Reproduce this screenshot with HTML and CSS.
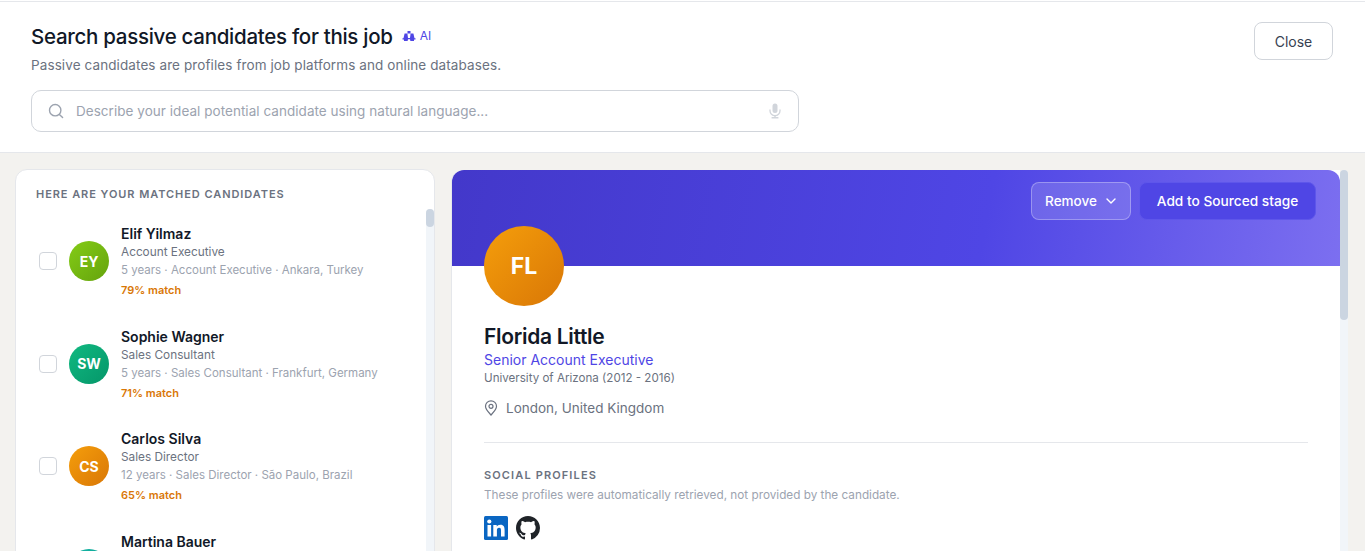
FILE: index.html
```html
<!DOCTYPE html>
<html lang="en">
<head>
    <meta charset="UTF-8">
    <meta name="viewport" content="width=device-width, initial-scale=1.0">
    <title>Search passive candidates</title>
    <link rel="stylesheet" href="styles.css">
</head>
<body>
    <header class="search-header">
        <div class="header-main">
            <div class="title-row">
                <h1>Search passive candidates for this job</h1>
                <span class="ai-badge">
                    <svg width="14" height="12" viewBox="0 0 14 12" fill="#4f46e5"><path d="M5.500 1h3v2.400h-3zM2.600 3.400h2.800l.6 4.600H8l.6-4.600h2.800l1.100 4.800H13.500V9.500h-1.400L12 11H8.400L8 9.200H6L5.600 11H2L1.900 9.500H.5V8.200h1z"/></svg>
                    AI
                </span>
            </div>
            <p class="subtitle">Passive candidates are profiles from job platforms and online databases.</p>
            <div class="search-box">
                <svg width="16" height="16" viewBox="0 0 16 16" fill="none" stroke="#9ca3af" stroke-width="1.400" stroke-linecap="round"><circle cx="7.200" cy="7.200" r="5.700"/><path d="M11.400 11.400l3.200 3.200"/></svg>
                <span class="placeholder">Describe your ideal potential candidate using natural language...</span>
                <svg class="mic" width="12" height="16" viewBox="0 0 12 16" fill="#d1d5db"><rect x="3.500" y="0.500" width="5" height="9.500" rx="2.500"/><path d="M1 6.500v1.200a5 5 0 0 0 10 0V6.500" fill="none" stroke="#d1d5db" stroke-width="1.300"/><rect x="5.300" y="12" width="1.400" height="2.500"/><rect x="2.500" y="14" width="7" height="1.500" rx=".5"/></svg>
            </div>
        </div>
        <button class="close-btn">Close</button>
    </header>

    <main class="content">
        <section class="candidates-card">
            <h2 class="section-label card-label">HERE ARE YOUR MATCHED CANDIDATES</h2>
            <div class="list-wrap">
                <div class="candidate-list">
                    <div class="candidate">
                        <span class="checkbox"></span>
                        <span class="avatar green">EY</span>
                        <div class="info">
                            <div class="name">Elif Yilmaz</div>
                            <div class="role">Account Executive</div>
                            <div class="meta">5 years · Account Executive · Ankara, Turkey</div>
                            <div class="match">79% match</div>
                        </div>
                    </div>
                    <div class="candidate">
                        <span class="checkbox"></span>
                        <span class="avatar teal">SW</span>
                        <div class="info">
                            <div class="name">Sophie Wagner</div>
                            <div class="role">Sales Consultant</div>
                            <div class="meta">5 years · Sales Consultant · Frankfurt, Germany</div>
                            <div class="match">71% match</div>
                        </div>
                    </div>
                    <div class="candidate">
                        <span class="checkbox"></span>
                        <span class="avatar orange">CS</span>
                        <div class="info">
                            <div class="name">Carlos Silva</div>
                            <div class="role">Sales Director</div>
                            <div class="meta">12 years · Sales Director · São Paulo, Brazil</div>
                            <div class="match">65% match</div>
                        </div>
                    </div>
                    <div class="candidate">
                        <span class="checkbox"></span>
                        <span class="avatar aqua"></span>
                        <div class="info">
                            <div class="name">Martina Bauer</div>
                        </div>
                    </div>
                </div>
                <div class="scrollbar list-scroll"><div class="thumb"></div></div>
            </div>
        </section>

        <section class="profile">
            <div class="banner">
                <button class="remove-btn">Remove
                    <svg width="12" height="12" viewBox="0 0 12 12" fill="none" stroke="#fff" stroke-width="1.400" stroke-linecap="round" stroke-linejoin="round"><path d="M2 4l4 4 4-4"/></svg>
                </button>
                <button class="add-btn">Add to Sourced stage</button>
            </div>
            <div class="profile-body">
                <span class="avatar orange big">FL</span>
                <h2 class="profile-name">Florida Little</h2>
                <div class="profile-title">Senior Account Executive</div>
                <div class="profile-edu">University of Arizona (2012 - 2016)</div>
                <div class="profile-loc">
                    <svg width="14" height="16" viewBox="0 0 14 16" fill="none" stroke="#6b7280" stroke-width="1.200"><path d="M7 15C4.500 12.300 1.500 9.400 1.500 6.300a5.500 5.500 0 0 1 11 0C12.500 9.400 9.500 12.300 7 15z"/><circle cx="7" cy="6.300" r="2"/></svg>
                    London, United Kingdom
                </div>
                <hr class="divider">
                <h3 class="section-label social-label">SOCIAL PROFILES</h3>
                <p class="social-note">These profiles were automatically retrieved, not provided by the candidate.</p>
                <div class="social-icons">
                    <svg width="24" height="24" viewBox="0 0 24 24"><rect width="24" height="24" rx="1.500" fill="#0a66c2"/><rect x="3.500" y="9" width="3.600" height="11.500" fill="#fff"/><circle cx="5.300" cy="5.500" r="2.100" fill="#fff"/><path d="M9.300 9h3.400v1.600c.6-1 1.900-1.900 3.700-1.900 3.500 0 4.200 2.300 4.200 5.300v6.500H17v-5.800c0-1.400 0-3-1.900-3s-2.200 1.400-2.200 2.900v5.900H9.300z" fill="#fff"/></svg>
                    <svg width="24" height="24" viewBox="0 0 16 16" fill="#1f2328"><path d="M8 0C3.580 0 0 3.580 0 8c0 3.540 2.290 6.530 5.470 7.590.4.070.55-.17.55-.38 0-.19-.01-.82-.01-1.490-2.010.37-2.530-.49-2.690-.94-.09-.23-.48-.94-.82-1.130-.28-.15-.68-.52-.01-.53.630-.01 1.080.58 1.230.82.720 1.210 1.870.87 2.330.66.070-.52.280-.87.510-1.070-1.780-.2-3.640-.89-3.640-3.950 0-.87.310-1.590.820-2.150-.08-.2-.36-1.020.08-2.120 0 0 .67-.21 2.200.82.640-.18 1.320-.27 2-.27s1.360.09 2 .27c1.530-1.040 2.200-.82 2.200-.82.440 1.100.16 1.920.08 2.120.51.560.82 1.270.82 2.150 0 3.070-1.870 3.750-3.650 3.950.29.250.54.730.54 1.480 0 1.070-.01 1.930-.01 2.200 0 .21.150.46.550.38A8.010 8.010 0 0 0 16 8c0-4.420-3.580-8-8-8z"/></svg>
                </div>
            </div>
        </section>
        <div class="scrollbar page-scroll"><div class="thumb"></div></div>
    </main>
</body>
</html>
```

FILE: styles.css
```css
* {
    box-sizing: border-box;
}
body {
    margin: 0;
    height: 551px;
    overflow: hidden;
    display: flex;
    flex-direction: column;
    font-family: Inter, "Liberation Sans", sans-serif;
    color: #111827;
    background: #f3f2ef;
    border-top: 1px solid white;
}
.search-header {
    height: 152px;
    flex-shrink: 0;
    display: flex;
    justify-content: space-between;
    align-items: flex-start;
    padding: 19px 32px 0 31px;
    background: white;
    border-top: 1px solid #e5e7eb;
    border-bottom: 1px solid #e5e7eb;
}
.title-row {
    display: flex;
    align-items: center;
    gap: 9px;
    height: 30px;
}
h1 {
    margin: 0;
    font-size: 20.500px;
    font-weight: 500;
    letter-spacing: -0.29px;
    color: #111827;
}
.ai-badge {
    display: flex;
    align-items: center;
    gap: 4px;
    font-size: 12px;
    color: #4f46e5;
    margin-bottom: 1px;
}
.subtitle {
    margin: 4px 0 0;
    font-size: 13.500px;
    line-height: 20px;
    color: #6b7280;
    letter-spacing: 0.1px;
}
.search-box {
    width: 768px;
    height: 42px;
    margin-top: 15px;
    display: flex;
    align-items: center;
    padding: 0 16px;
    border: 1px solid #d1d5db;
    border-radius: 10px;
}
.placeholder {
    margin-left: 12px;
    flex: 1;
    font-size: 13.500px;
    color: #9ca3af;
    letter-spacing: 0.04px;
}
.mic {
    margin-right: 1px;
}
.close-btn {
    width: 79px;
    height: 38px;
    margin-top: 1px;
    background: white;
    border: 1px solid #d1d5db;
    border-radius: 8px;
    font-family: inherit;
    font-size: 14px;
    color: #374151;
}
.content {
    flex: 1;
    min-height: 0;
    display: flex;
    align-items: flex-start;
    padding: 16px 0 0 15px;
    overflow: hidden;
}
.candidates-card {
    width: 420px;
    height: 400px;
    flex-shrink: 0;
    background: white;
    border: 1px solid #e5e7eb;
    border-radius: 12px;
}
.section-label {
    margin: 0;
    font-size: 11px;
    line-height: 16px;
    font-weight: 600;
    letter-spacing: 0.94px;
    color: #6b7280;
}
.social-label {
    letter-spacing: 1.130px;
}
.card-label {
    padding: 16px 20px 0;
}
.list-wrap {
    display: flex;
    height: 360px;
    margin-top: 7px;
}
.candidate-list {
    flex: 1;
    overflow: hidden;
    padding-top: 8px;
}
.candidate {
    height: 102.700px;
    display: flex;
    align-items: flex-start;
    padding: 0 0 0 23px;
}
.checkbox {
    width: 18px;
    height: 18px;
    margin-top: 35px;
    border: 1px solid #d1d5db;
    border-radius: 4px;
    flex-shrink: 0;
}
.avatar {
    width: 40px;
    height: 40px;
    border-radius: 50%;
    margin: 24px 12px 0;
    flex-shrink: 0;
    display: flex;
    align-items: center;
    justify-content: center;
    color: white;
    font-size: 14px;
    font-weight: 700;
}
.green { background: linear-gradient(135deg, #84cc16, #65a30d); }
.teal { background: linear-gradient(135deg, #10b981, #059669); }
.orange { background: linear-gradient(135deg, #f59e0b, #d97706); }
.aqua { background: linear-gradient(135deg, #14b8a6, #0d9488); }
.info {
    padding-top: 8px;
}
.name {
    font-size: 14px;
    line-height: 18px;
    font-weight: 600;
    color: #111827;
}
.role {
    font-size: 11.800px;
    line-height: 18px;
    color: #6b7280;
}
.meta {
    font-size: 11.500px;
    line-height: 18px;
    color: #9ca3af;
}
.match {
    margin-top: 3px;
    font-size: 11px;
    line-height: 16px;
    font-weight: 600;
    color: #d97706;
}
.scrollbar {
    width: 8px;
    flex-shrink: 0;
    background: #f1f5f9;
    border-radius: 4px;
}
.thumb {
    background: #cbd5e1;
    border-radius: 4px;
}
.list-scroll .thumb {
    height: 18px;
}
.page-scroll {
    height: 400px;
    margin-top: 1px;
}
.page-scroll .thumb {
    height: 150px;
}
.profile {
    width: 889px;
    height: 400px;
    margin: 1px 0 0 16px;
    flex-shrink: 0;
    background: white;
    border-radius: 12px 0 0 0;
    border-left: 1px solid #e5e7eb;
}
.banner {
    height: 96px;
    display: flex;
    justify-content: flex-end;
    align-items: flex-start;
    gap: 8px;
    padding: 12px 24px 0 0;
    border-radius: 12px 12px 0 0;
    background: linear-gradient(100deg, #4338ca 0%, #4f46e5 60%, #7c6ff0 100%);
}
.remove-btn, .add-btn {
    height: 38px;
    border-radius: 8px;
    font-family: inherit;
    font-weight: 500;
    color: white;
}
.remove-btn {
    width: 100px;
    display: flex;
    align-items: center;
    justify-content: center;
    gap: 8px;
    font-size: 13.500px;
    background: rgba(255,255,255,0.15);
    border: 1px solid rgba(255,255,255,0.3);
}
.add-btn {
    width: 177px;
    font-size: 13.700px;
    background: #4f46e5;
    border: 1px solid #5e56ea;
}
.profile-body {
    padding: 0 32px;
}
.big {
    width: 80px;
    height: 80px;
    margin: -40px 0 0;
    font-size: 23px;
}
.profile-name {
    margin: 16px 0 0;
    font-size: 21px;
    line-height: 30px;
    font-weight: 600;
    letter-spacing: -0.3px;
    color: #111827;
}
.profile-title {
    margin-top: -1px;
    font-size: 14px;
    line-height: 18px;
    color: #4f46e5;
}
.profile-edu {
    font-size: 11.600px;
    line-height: 18px;
    color: #6b7280;
}
.profile-loc {
    margin-top: 11px;
    display: flex;
    align-items: center;
    gap: 8px;
    height: 20px;
    font-size: 13.500px;
    color: #6b7280;
}
.divider {
    margin: 24px 0 24px;
    border: none;
    border-top: 1px solid #e5e7eb;
}
.social-note {
    margin: 4px 0 0;
    font-size: 11.750px;
    line-height: 16px;
    color: #9ca3af;
}
.social-icons {
    margin-top: 13px;
    display: flex;
    gap: 8px;
}
```
